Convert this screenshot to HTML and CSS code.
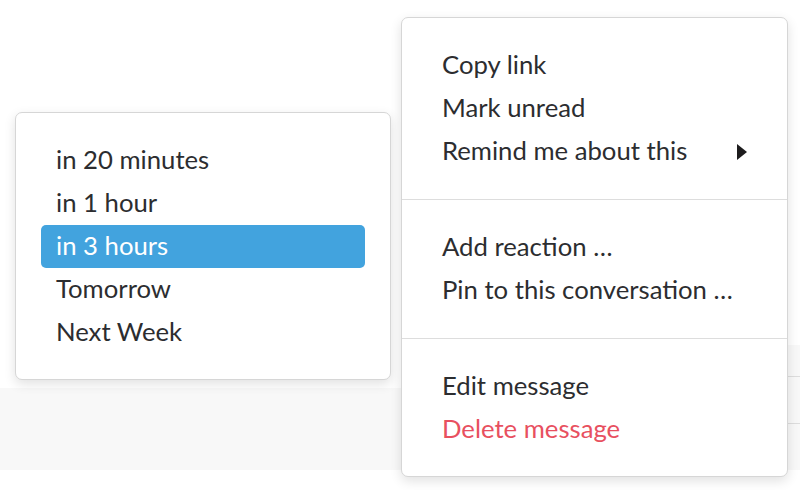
FILE: index.html
```html
<!DOCTYPE html>
<html>
<head>
<meta charset="utf-8">
<link rel="stylesheet" href="styles.css">
</head>
<body>
<div class="page">
  <div class="band"></div>
  <div class="side">
    <div class="side-row"></div>
    <div class="side-row"></div>
  </div>
</div>

<div class="menu submenu">
  <div class="group">
    <div class="item">in 20 minutes</div>
    <div class="item">in 1 hour</div>
    <div class="item active">in 3 hours</div>
    <div class="item">Tomorrow</div>
    <div class="item">Next Week</div>
  </div>
</div>

<div class="menu main">
  <div class="group">
    <div class="item">Copy link</div>
    <div class="item">Mark unread</div>
    <div class="item has-sub">Remind me about this <span class="arrow"></span></div>
  </div>
  <div class="group">
    <div class="item">Add reaction …</div>
    <div class="item">Pin to this conversation …</div>
  </div>
  <div class="group">
    <div class="item">Edit message</div>
    <div class="item danger">Delete message</div>
  </div>
</div>
</body>
</html>
```

FILE: styles.css
```css
html, body {
  margin: 0;
  padding: 0;
  background: #ffffff;
  width: 800px;
  height: 490px;
  overflow: hidden;
  font-family: Lato, "Open Sans", sans-serif;
  color: #2c2d30;
}

.page {
  position: relative;
  width: 800px;
  height: 490px;
}

.band {
  position: absolute;
  left: 0;
  top: 388px;
  width: 800px;
  height: 82px;
  background: #f8f8f8;
}

.side {
  position: absolute;
  left: 780px;
  top: 345px;
  width: 20px;
  height: 125px;
  background: #f8f8f8;
  display: flex;
  flex-direction: column;
  padding-top: 31px;
  box-sizing: border-box;
}

.side-row {
  height: 48px;
  border-top: 1px solid #dddddd;
}

.menu {
  position: absolute;
  background: #ffffff;
  border: 1px solid #d6d6d6;
  border-radius: 7px;
  box-shadow: 0 4px 12px rgba(0, 0, 0, 0.12);
  box-sizing: border-box;
}

.main {
  left: 401px;
  top: 17px;
  width: 387px;
  height: 460px;
}

.submenu {
  left: 15px;
  top: 112px;
  width: 376px;
  height: 268px;
}

.group {
  padding: 26px 25px;
}

.group + .group {
  border-top: 1px solid #dddddd;
}

.item {
  height: 43px;
  line-height: 41px;
  padding: 0 15px 2px;
  box-sizing: border-box;
  font-size: 25.7px;
  border-radius: 5px;
  white-space: nowrap;
  display: flex;
  align-items: center;
  justify-content: space-between;
}

.item.active {
  background: #42a3de;
  color: #ffffff;
}

.item.danger {
  color: #e8505f;
}

.arrow {
  width: 0;
  height: 0;
  border-top: 8px solid transparent;
  border-bottom: 8px solid transparent;
  border-left: 10px solid #1d1c1d;
  margin-top: 2px;
}
```
